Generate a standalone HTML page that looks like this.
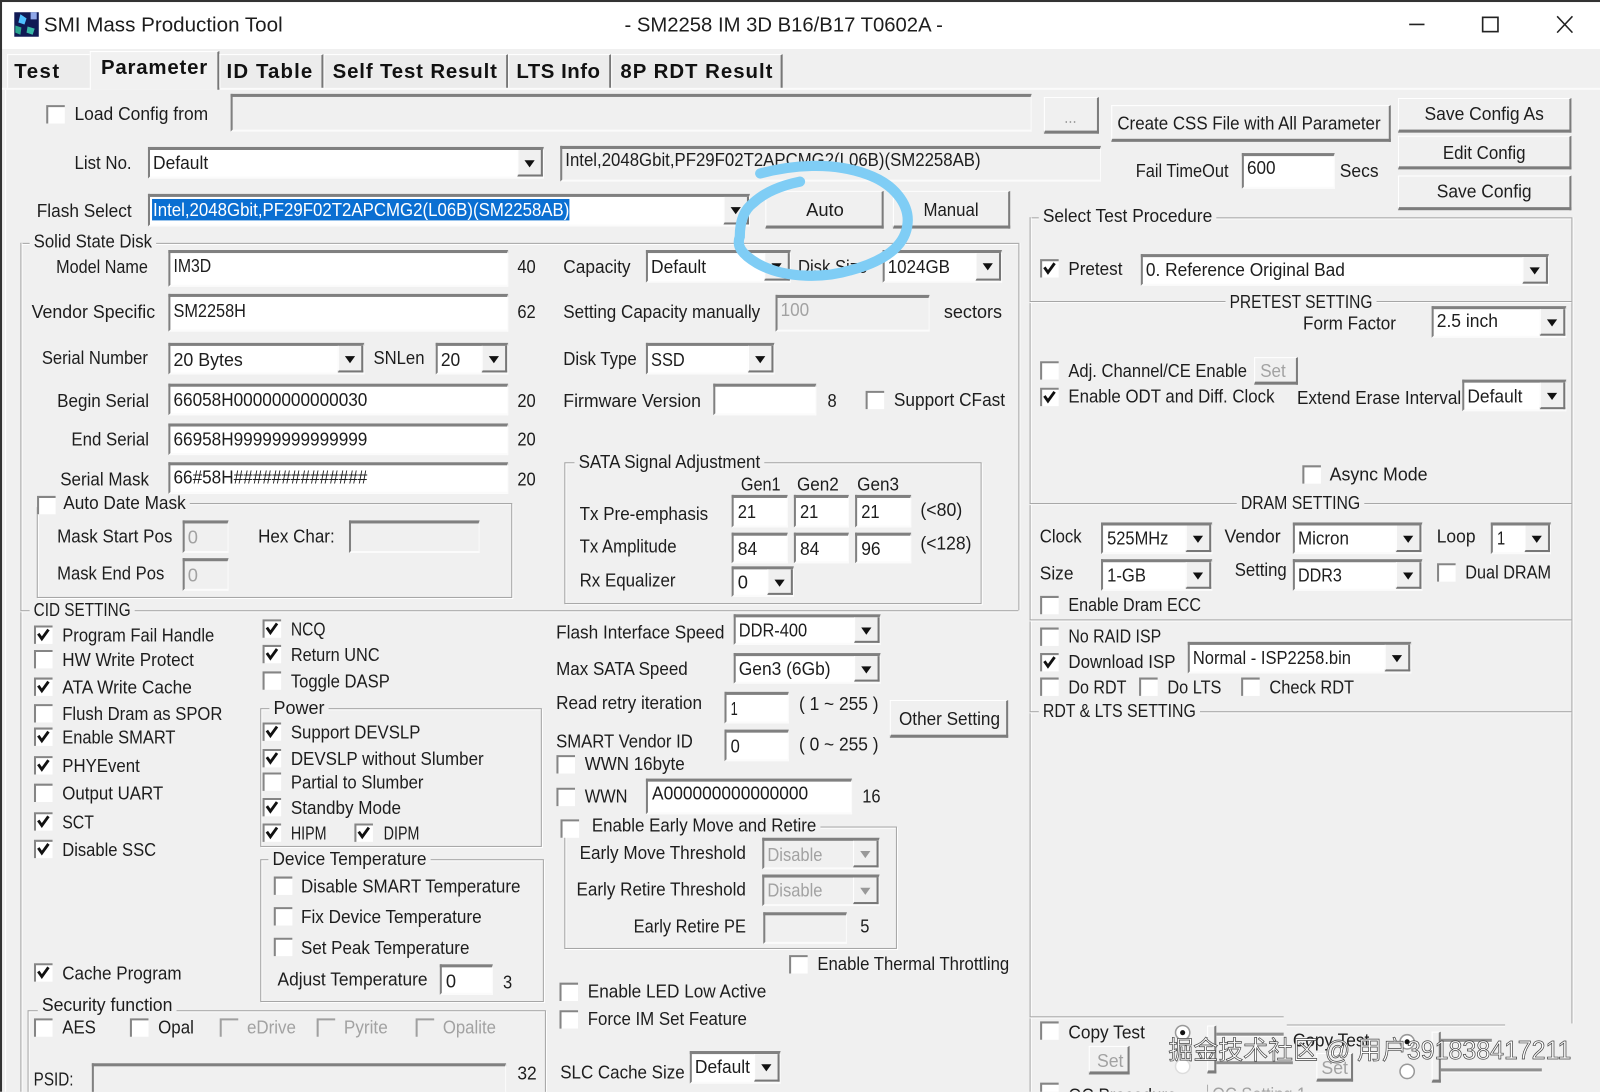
<!DOCTYPE html>
<html><head><meta charset="utf-8"><title>SMI Mass Production Tool</title>
<style>
html,body{margin:0;padding:0;width:1600px;height:1092px;overflow:hidden;background:#f0f0f0}
#p{position:absolute;left:0;top:0;width:1568px;height:1070px;transform:scale(1.020408);transform-origin:0 0;background:#f0f0f0;overflow:hidden;filter:blur(.3px)}
#p div{position:absolute;box-sizing:border-box}
.b{background:#fff;border-top:3px solid #808080;border-left:2px solid #808080;border-right:1px solid #fbfbfb;border-bottom:2px solid #fbfbfb}
.d{background:#f0f0f0}
.r{background:#f0f0f0;border-top:1px solid #fff;border-left:1px solid #fff;border-right:2px solid #7c7c7c;border-bottom:3px solid #7c7c7c}
.b u{position:absolute;right:0;top:0;bottom:0;width:25px;background:#f0f0f0;border-right:2px solid #777;border-bottom:2px solid #777;border-left:1px solid #fff;box-sizing:border-box}
.b u:after{content:"";position:absolute;left:6px;top:10px;border-left:5.5px solid transparent;border-right:5.5px solid transparent;border-top:7px solid #111}
.x u:after{border-top-color:#999}
.g{border:1px solid #a4a4a4;box-shadow:1px 1px 0 #fff,inset 1px 1px 0 #fff}
.h{height:1px;background:#a4a4a4;box-shadow:0 1px 0 #fff}
.v{width:1px;background:#a4a4a4;box-shadow:1px 0 0 #fff}
.k{height:8px;background:#f0f0f0}
.n{background:#ececec;border-top:1px solid #fff;border-left:1px solid #fff;border-right:2px solid #777}
svg{position:absolute;left:0;top:0}
text{font-family:"Liberation Sans",sans-serif;font-size:18px;fill:#1d1d1d;transform:translateY(.7px)}
.y{fill:#a2a2a2}
.tt{font-size:20px;transform:none}
.tb{font-size:20px;font-weight:bold;fill:#111;transform:translateY(-.5px)}
.w{fill:#fff}
.wm{font-family:"Liberation Sans","Noto Sans CJK SC",sans-serif;font-size:25px;fill:#fff;stroke:#444;stroke-width:.7px;transform:none}
</style></head><body>
<div id="p">
<!-- title bar -->
<div style="left:0;top:0;width:1568px;height:48px;background:#fff"></div>
<div style="left:0;top:0;width:1568px;height:2px;background:#333"></div>
<div style="left:0;top:0;width:2px;height:1070px;background:#333"></div>
<!-- tabs -->
<div style="left:2px;top:86px;width:1566px;height:2px;background:#fbfbfb"></div>
<div class="n" style="left:7px;top:53px;width:81px;height:33px;border-right:0"></div>
<div style="left:88px;top:50px;width:127px;height:38px;background:#f1f1f1;border-top:1px solid #fff;border-left:1px solid #fff;border-right:2px solid #777"></div>
<div class="n" style="left:215px;top:53px;width:102px;height:33px"></div>
<div class="n" style="left:317px;top:53px;width:181px;height:33px"></div>
<div class="n" style="left:498px;top:53px;width:101px;height:33px"></div>
<div class="n" style="left:599px;top:53px;width:168px;height:33px"></div>
<div style="left:5px;top:88px;width:1px;height:982px;background:#fff"></div>
<!-- top row boxes -->
<div class="b d" style="left:226px;top:92px;width:785px;height:37px"></div>
<div class="r" style="left:1023px;top:95px;width:54px;height:36px"></div>
<div class="r" style="left:1089px;top:103px;width:274px;height:36px"></div>
<div class="r" style="left:1370px;top:96px;width:170px;height:34px"></div>
<div class="r" style="left:1370px;top:133px;width:170px;height:33px"></div>
<div class="r" style="left:1370px;top:172px;width:170px;height:34px"></div>
<div class="b" style="left:145px;top:144px;width:388px;height:31px"><u></u></div>
<div class="b d" style="left:549px;top:143px;width:530px;height:35px"></div>
<div class="b" style="left:1217px;top:150px;width:91px;height:35px"></div>
<div class="b" style="left:145px;top:190px;width:590px;height:32px"><u></u></div>
<div style="left:149px;top:195px;width:409px;height:21px;background:#0a6fd2"></div>
<div class="r" style="left:750px;top:187px;width:116px;height:37px"></div>
<div class="r" style="left:875px;top:187px;width:115px;height:37px"></div>
<!-- SSD group frames -->
<div class="h" style="left:20px;top:238px;width:978px"></div>
<div class="v" style="left:20px;top:238px;height:832px"></div>
<div class="v" style="left:998px;top:238px;height:360px"></div>
<div class="h" style="left:20px;top:598px;width:978px"></div>
<div class="k" style="left:29px;top:234px;width:124px"></div>
<div class="k" style="left:29px;top:594px;width:103px"></div>
<!-- SSD boxes -->
<div class="b" style="left:165px;top:245px;width:333px;height:36px"></div>
<div class="b" style="left:633px;top:245px;width:142px;height:32px"><u></u></div>
<div class="b" style="left:865px;top:245px;width:117px;height:32px"><u></u></div>
<div class="b" style="left:165px;top:288px;width:333px;height:37px"></div>
<div class="b d" style="left:760px;top:289px;width:151px;height:36px"></div>
<div class="b" style="left:165px;top:336px;width:192px;height:31px"><u></u></div>
<div class="b" style="left:427px;top:336px;width:71px;height:31px"><u></u></div>
<div class="b" style="left:633px;top:336px;width:126px;height:31px"><u></u></div>
<div class="b" style="left:165px;top:376px;width:333px;height:31px"></div>
<div class="b" style="left:699px;top:376px;width:101px;height:31px"></div>
<div class="b" style="left:165px;top:415px;width:333px;height:31px"></div>
<div class="b" style="left:165px;top:453px;width:333px;height:31px"></div>
<!-- SATA group -->
<div class="g" style="left:553px;top:453px;width:409px;height:139px"></div>
<div class="k" style="left:563px;top:449px;width:186px"></div>
<div class="b" style="left:717px;top:485px;width:55px;height:32px"></div>
<div class="b" style="left:778px;top:485px;width:54px;height:32px"></div>
<div class="b" style="left:838px;top:485px;width:55px;height:32px"></div>
<div class="b" style="left:717px;top:522px;width:55px;height:30px"></div>
<div class="b" style="left:778px;top:522px;width:54px;height:30px"></div>
<div class="b" style="left:838px;top:522px;width:55px;height:30px"></div>
<div class="b" style="left:717px;top:555px;width:61px;height:30px"><u></u></div>
<!-- auto date -->
<div class="g" style="left:36px;top:493px;width:466px;height:93px"></div>
<div class="k" style="left:34px;top:489px;width:152px"></div>
<div class="b d" style="left:179px;top:510px;width:45px;height:32px"></div>
<div class="b d" style="left:342px;top:510px;width:128px;height:32px"></div>
<div class="b d" style="left:179px;top:547px;width:45px;height:32px"></div>
<!-- power / temp -->
<div class="g" style="left:255px;top:694px;width:276px;height:136px"></div>
<div class="k" style="left:264px;top:690px;width:58px"></div>
<div class="g" style="left:255px;top:842px;width:278px;height:140px"></div>
<div class="k" style="left:263px;top:838px;width:159px"></div>
<div class="b" style="left:431px;top:945px;width:52px;height:30px"></div>
<!-- middle -->
<div class="b" style="left:719px;top:602px;width:144px;height:30px"><u></u></div>
<div class="b" style="left:719px;top:640px;width:144px;height:30px"><u></u></div>
<div class="b" style="left:710px;top:678px;width:63px;height:31px"></div>
<div class="r" style="left:872px;top:686px;width:116px;height:37px"></div>
<div class="b" style="left:710px;top:715px;width:63px;height:31px"></div>
<div class="b" style="left:633px;top:763px;width:202px;height:35px"></div>
<div class="g" style="left:553px;top:810px;width:326px;height:120px"></div>
<div class="k" style="left:548px;top:806px;width:256px"></div>
<div class="b d x" style="left:747px;top:821px;width:115px;height:31px"><u></u></div>
<div class="b d x" style="left:747px;top:857px;width:115px;height:31px"><u></u></div>
<div class="b d" style="left:748px;top:894px;width:82px;height:31px"></div>
<div class="b" style="left:676px;top:1030px;width:89px;height:32px"><u></u></div>
<!-- security -->
<div class="g" style="left:27px;top:990px;width:508px;height:90px"></div>
<div class="k" style="left:37px;top:986px;width:136px"></div>
<div class="b d" style="left:90px;top:1042px;width:406px;height:34px"></div>
<!-- right column -->
<div class="h" style="left:1009px;top:213px;width:531px"></div>
<div class="v" style="left:1009px;top:213px;height:857px"></div>
<div class="v" style="left:1540px;top:213px;height:790px"></div>
<div class="k" style="left:1018px;top:209px;width:174px"></div>
<div class="b" style="left:1118px;top:249px;width:400px;height:31px"><u></u></div>
<div class="h" style="left:1009px;top:295px;width:531px"></div>
<div class="k" style="left:1201px;top:291px;width:148px"></div>
<div class="b" style="left:1403px;top:300px;width:132px;height:31px"><u></u></div>
<div class="r" style="left:1229px;top:350px;width:43px;height:27px"></div>
<div class="b" style="left:1433px;top:372px;width:102px;height:31px"><u></u></div>
<div class="h" style="left:1009px;top:493px;width:531px"></div>
<div class="k" style="left:1212px;top:489px;width:125px"></div>
<div class="b" style="left:1079px;top:512px;width:109px;height:31px"><u></u></div>
<div class="b" style="left:1267px;top:512px;width:127px;height:31px"><u></u></div>
<div class="b" style="left:1461px;top:512px;width:59px;height:31px"><u></u></div>
<div class="b" style="left:1079px;top:548px;width:109px;height:31px"><u></u></div>
<div class="b" style="left:1267px;top:548px;width:127px;height:31px"><u></u></div>
<div class="h" style="left:1009px;top:607px;width:531px"></div>
<div class="b" style="left:1164px;top:629px;width:219px;height:31px"><u></u></div>
<div class="h" style="left:1009px;top:697px;width:531px"></div>
<div class="k" style="left:1018px;top:693px;width:158px"></div>
<!-- bottom right -->
<div class="h" style="left:1009px;top:996px;width:249px"></div>
<div class="h" style="left:1261px;top:1004px;width:214px"></div>
<div class="v" style="left:1183px;top:1063px;height:7px"></div>
<div class="r" style="left:1067px;top:1025px;width:40px;height:28px"></div>
<div class="r" style="left:1290px;top:1032px;width:36px;height:28px"></div>
<div class="h" style="left:1192px;top:1012px;width:66px;height:3px;background:#909090"></div>
<div class="h" style="left:1192px;top:1040px;width:75px;height:3px;background:#909090"></div>
<div class="h" style="left:1411px;top:1018px;width:51px;height:3px;background:#909090"></div>
<div class="h" style="left:1411px;top:1047px;width:100px;height:3px;background:#909090"></div>
<div class="r" style="left:1183px;top:1005px;width:9px;height:47px"></div>
<div class="r" style="left:1403px;top:1011px;width:9px;height:50px"></div>

<svg width="1568" height="1070" viewBox="0 0 1568 1070" xmlns="http://www.w3.org/2000/svg">
<defs>
<g id="c0"><rect x="-.5" width="18" height="18" fill="#fff"/><path d="M.3 18V1H17.500" fill="none" stroke="#858585" stroke-width="2"/></g>
<g id="c1"><use href="#c0"/><path d="M3.500 8L7 13L13.500 4" fill="none" stroke="#111" stroke-width="2.800"/></g>
<g id="c2"><rect x="-.5" width="18" height="18" fill="#f0f0f0"/><path d="M.3 18V1H17.500" fill="none" stroke="#a0a0a0" stroke-width="2"/></g>
</defs>

<!-- window icon -->
<rect x="14" y="12" width="24" height="24" fill="#101a55"/>
<path d="M20 14l6 4-2 6-6-2z" fill="#4fc0ff"/><path d="M15 25l6 2-1 7-5-2z" fill="#2aa58f"/><path d="M27 26l7 2-2 6-6-2z" fill="#39b8a8"/><path d="M30 12h6v7h-6z" fill="#8fa7e8"/>

<text class="tt" x="43" y="31" textLength="234" lengthAdjust="spacingAndGlyphs">SMI Mass Production Tool</text>
<text class="tt" x="612" y="31" textLength="312" lengthAdjust="spacingAndGlyphs">- SM2258 IM 3D B16/B17 T0602A -</text>
<path d="M1381 24h15" stroke="#222" stroke-width="1.6"/>
<rect x="1453" y="17" width="15" height="14" fill="none" stroke="#222" stroke-width="1.6"/>
<path d="M1526 16l15 16M1541 16l-15 16" stroke="#222" stroke-width="1.5"/>

<text class="tb" x="14" y="77" textLength="44" lengthAdjust="spacing">Test</text>
<text class="tb" x="99" y="73" textLength="104" lengthAdjust="spacing">Parameter</text>
<text class="tb" x="222" y="77" textLength="84" lengthAdjust="spacing">ID Table</text>
<text class="tb" x="326" y="77" textLength="161" lengthAdjust="spacing">Self Test Result</text>
<text class="tb" x="506" y="77" textLength="82" lengthAdjust="spacing">LTS Info</text>
<text class="tb" x="608" y="77" textLength="149" lengthAdjust="spacing">8P RDT Result</text>

<use href="#c0" x="46" y="103"/>
<text x="73" y="117" textLength="131" lengthAdjust="spacingAndGlyphs">Load Config from</text>
<text class="y" x="1043" y="120" textLength="12" lengthAdjust="spacingAndGlyphs">...</text>
<text x="1095" y="126" textLength="258" lengthAdjust="spacingAndGlyphs">Create CSS File with All Parameter</text>
<text x="1396" y="117" textLength="117" lengthAdjust="spacingAndGlyphs">Save Config As</text>
<text x="1414" y="155" textLength="81" lengthAdjust="spacingAndGlyphs">Edit Config</text>
<text x="1408" y="193" textLength="93" lengthAdjust="spacingAndGlyphs">Save Config</text>
<text x="73" y="165" textLength="56" lengthAdjust="spacingAndGlyphs">List No.</text>
<text x="150" y="165" textLength="54" lengthAdjust="spacingAndGlyphs">Default</text>
<text x="554" y="162" textLength="407" lengthAdjust="spacingAndGlyphs">Intel,2048Gbit,PF29F02T2APCMG2(L06B)(SM2258AB)</text>
<text x="1113" y="173" textLength="91" lengthAdjust="spacingAndGlyphs">Fail TimeOut</text>
<text x="1222" y="170" textLength="28" lengthAdjust="spacingAndGlyphs">600</text>
<text x="1313" y="173" textLength="38" lengthAdjust="spacingAndGlyphs">Secs</text>
<text x="36" y="212" textLength="93" lengthAdjust="spacingAndGlyphs">Flash Select</text>
<text class="w" x="150" y="211" textLength="408" lengthAdjust="spacingAndGlyphs">Intel,2048Gbit,PF29F02T2APCMG2(L06B)(SM2258AB)</text>
<text x="790" y="211" textLength="37" lengthAdjust="spacingAndGlyphs">Auto</text>
<text x="905" y="211" textLength="54" lengthAdjust="spacingAndGlyphs">Manual</text>

<text x="33" y="242" textLength="116" lengthAdjust="spacingAndGlyphs">Solid State Disk</text>
<text x="55" y="267" textLength="90" lengthAdjust="spacingAndGlyphs">Model Name</text>
<text x="170" y="266" textLength="37" lengthAdjust="spacingAndGlyphs">IM3D</text>
<text x="507" y="267" textLength="18" lengthAdjust="spacingAndGlyphs">40</text>
<text x="552" y="267" textLength="66" lengthAdjust="spacingAndGlyphs">Capacity</text>
<text x="638" y="267" textLength="54" lengthAdjust="spacingAndGlyphs">Default</text>
<text x="782" y="267" textLength="68" lengthAdjust="spacingAndGlyphs">Disk Size</text>
<text x="870" y="267" textLength="61" lengthAdjust="spacingAndGlyphs">1024GB</text>
<text x="31" y="311" textLength="121" lengthAdjust="spacingAndGlyphs">Vendor Specific</text>
<text x="170" y="310" textLength="71" lengthAdjust="spacingAndGlyphs">SM2258H</text>
<text x="507" y="311" textLength="18" lengthAdjust="spacingAndGlyphs">62</text>
<text x="552" y="311" textLength="193" lengthAdjust="spacingAndGlyphs">Setting Capacity manually</text>
<text class="y" x="765" y="309" textLength="28" lengthAdjust="spacingAndGlyphs">100</text>
<text x="925" y="311" textLength="57" lengthAdjust="spacingAndGlyphs">sectors</text>
<text x="41" y="356" textLength="104" lengthAdjust="spacingAndGlyphs">Serial Number</text>
<text x="170" y="358" textLength="68" lengthAdjust="spacingAndGlyphs">20 Bytes</text>
<text x="366" y="356" textLength="50" lengthAdjust="spacingAndGlyphs">SNLen</text>
<text x="432" y="358" textLength="19" lengthAdjust="spacingAndGlyphs">20</text>
<text x="552" y="357" textLength="72" lengthAdjust="spacingAndGlyphs">Disk Type</text>
<text x="638" y="358" textLength="33" lengthAdjust="spacingAndGlyphs">SSD</text>
<text x="56" y="398" textLength="90" lengthAdjust="spacingAndGlyphs">Begin Serial</text>
<text x="170" y="397" textLength="190" lengthAdjust="spacingAndGlyphs">66058H00000000000030</text>
<text x="507" y="398" textLength="18" lengthAdjust="spacingAndGlyphs">20</text>
<text x="552" y="398" textLength="135" lengthAdjust="spacingAndGlyphs">Firmware Version</text>
<text x="811" y="398" textLength="9" lengthAdjust="spacingAndGlyphs">8</text>
<use href="#c0" x="849" y="383"/>
<text x="876" y="397" textLength="109" lengthAdjust="spacingAndGlyphs">Support CFast</text>
<text x="70" y="436" textLength="76" lengthAdjust="spacingAndGlyphs">End Serial</text>
<text x="170" y="436" textLength="190" lengthAdjust="spacingAndGlyphs">66958H99999999999999</text>
<text x="507" y="436" textLength="18" lengthAdjust="spacingAndGlyphs">20</text>
<text x="59" y="475" textLength="87" lengthAdjust="spacingAndGlyphs">Serial Mask</text>
<text x="170" y="473" textLength="190" lengthAdjust="spacingAndGlyphs">66#58H##############</text>
<text x="507" y="475" textLength="18" lengthAdjust="spacingAndGlyphs">20</text>

<text x="567" y="458" textLength="178" lengthAdjust="spacingAndGlyphs">SATA Signal Adjustment</text>
<text x="726" y="480" textLength="39" lengthAdjust="spacingAndGlyphs">Gen1</text>
<text x="781" y="480" textLength="41" lengthAdjust="spacingAndGlyphs">Gen2</text>
<text x="840" y="480" textLength="41" lengthAdjust="spacingAndGlyphs">Gen3</text>
<text x="568" y="509" textLength="126" lengthAdjust="spacingAndGlyphs">Tx Pre-emphasis</text>
<text x="723" y="507" textLength="18" lengthAdjust="spacingAndGlyphs">21</text>
<text x="784" y="507" textLength="18" lengthAdjust="spacingAndGlyphs">21</text>
<text x="844" y="507" textLength="18" lengthAdjust="spacingAndGlyphs">21</text>
<text x="902" y="505" textLength="41" lengthAdjust="spacingAndGlyphs">(&lt;80)</text>
<text x="568" y="541" textLength="95" lengthAdjust="spacingAndGlyphs">Tx Amplitude</text>
<text x="723" y="543" textLength="19" lengthAdjust="spacingAndGlyphs">84</text>
<text x="784" y="543" textLength="19" lengthAdjust="spacingAndGlyphs">84</text>
<text x="844" y="543" textLength="19" lengthAdjust="spacingAndGlyphs">96</text>
<text x="902" y="538" textLength="50" lengthAdjust="spacingAndGlyphs">(&lt;128)</text>
<text x="568" y="574" textLength="94" lengthAdjust="spacingAndGlyphs">Rx Equalizer</text>
<text x="723" y="576" textLength="10" lengthAdjust="spacingAndGlyphs">0</text>

<use href="#c0" x="37" y="486"/>
<text x="62" y="498" textLength="120" lengthAdjust="spacingAndGlyphs">Auto Date Mask</text>
<text x="56" y="531" textLength="113" lengthAdjust="spacingAndGlyphs">Mask Start Pos</text>
<text class="y" x="184" y="532" textLength="10" lengthAdjust="spacingAndGlyphs">0</text>
<text x="253" y="531" textLength="75" lengthAdjust="spacingAndGlyphs">Hex Char:</text>
<text x="56" y="567" textLength="105" lengthAdjust="spacingAndGlyphs">Mask End Pos</text>
<text class="y" x="184" y="569" textLength="10" lengthAdjust="spacingAndGlyphs">0</text>

<text x="33" y="603" textLength="95" lengthAdjust="spacingAndGlyphs">CID SETTING</text>
<use href="#c1" x="34" y="613"/><text x="61" y="628" textLength="149" lengthAdjust="spacingAndGlyphs">Program Fail Handle</text>
<use href="#c0" x="34" y="637"/><text x="61" y="652" textLength="129" lengthAdjust="spacingAndGlyphs">HW Write Protect</text>
<use href="#c1" x="34" y="664"/><text x="61" y="679" textLength="127" lengthAdjust="spacingAndGlyphs">ATA Write Cache</text>
<use href="#c0" x="34" y="690"/><text x="61" y="705" textLength="157" lengthAdjust="spacingAndGlyphs">Flush Dram as SPOR</text>
<use href="#c1" x="34" y="713"/><text x="61" y="728" textLength="111" lengthAdjust="spacingAndGlyphs">Enable SMART</text>
<use href="#c1" x="34" y="741"/><text x="61" y="756" textLength="76" lengthAdjust="spacingAndGlyphs">PHYEvent</text>
<use href="#c0" x="34" y="768"/><text x="61" y="783" textLength="99" lengthAdjust="spacingAndGlyphs">Output UART</text>
<use href="#c1" x="34" y="796"/><text x="61" y="811" textLength="31" lengthAdjust="spacingAndGlyphs">SCT</text>
<use href="#c1" x="34" y="823"/><text x="61" y="838" textLength="92" lengthAdjust="spacingAndGlyphs">Disable SSC</text>
<use href="#c1" x="34" y="944"/><text x="61" y="959" textLength="117" lengthAdjust="spacingAndGlyphs">Cache Program</text>

<use href="#c1" x="258" y="607"/><text x="285" y="622" textLength="34" lengthAdjust="spacingAndGlyphs">NCQ</text>
<use href="#c1" x="258" y="632"/><text x="285" y="647" textLength="87" lengthAdjust="spacingAndGlyphs">Return UNC</text>
<use href="#c0" x="258" y="658"/><text x="285" y="673" textLength="97" lengthAdjust="spacingAndGlyphs">Toggle DASP</text>
<text x="268" y="699" textLength="50" lengthAdjust="spacingAndGlyphs">Power</text>
<use href="#c1" x="258" y="708"/><text x="285" y="723" textLength="127" lengthAdjust="spacingAndGlyphs">Support DEVSLP</text>
<use href="#c1" x="258" y="734"/><text x="285" y="749" textLength="189" lengthAdjust="spacingAndGlyphs">DEVSLP without Slumber</text>
<use href="#c0" x="258" y="757"/><text x="285" y="772" textLength="130" lengthAdjust="spacingAndGlyphs">Partial to Slumber</text>
<use href="#c1" x="258" y="782"/><text x="285" y="797" textLength="108" lengthAdjust="spacingAndGlyphs">Standby Mode</text>
<use href="#c1" x="258" y="807"/><text x="285" y="822" textLength="35" lengthAdjust="spacingAndGlyphs">HIPM</text>
<use href="#c1" x="348" y="807"/><text x="376" y="822" textLength="35" lengthAdjust="spacingAndGlyphs">DIPM</text>
<text x="267" y="847" textLength="151" lengthAdjust="spacingAndGlyphs">Device Temperature</text>
<use href="#c0" x="269" y="859"/><text x="295" y="874" textLength="215" lengthAdjust="spacingAndGlyphs">Disable SMART Temperature</text>
<use href="#c0" x="269" y="889"/><text x="295" y="904" textLength="177" lengthAdjust="spacingAndGlyphs">Fix Device Temperature</text>
<use href="#c0" x="269" y="919"/><text x="295" y="934" textLength="165" lengthAdjust="spacingAndGlyphs">Set Peak Temperature</text>
<text x="272" y="965" textLength="147" lengthAdjust="spacingAndGlyphs">Adjust Temperature</text>
<text x="437" y="967" textLength="10" lengthAdjust="spacingAndGlyphs">0</text>
<text x="493" y="968" textLength="9" lengthAdjust="spacingAndGlyphs">3</text>

<text x="545" y="625" textLength="165" lengthAdjust="spacingAndGlyphs">Flash Interface Speed</text>
<text x="724" y="623" textLength="67" lengthAdjust="spacingAndGlyphs">DDR-400</text>
<text x="545" y="661" textLength="129" lengthAdjust="spacingAndGlyphs">Max SATA Speed</text>
<text x="724" y="661" textLength="90" lengthAdjust="spacingAndGlyphs">Gen3 (6Gb)</text>
<text x="545" y="694" textLength="143" lengthAdjust="spacingAndGlyphs">Read retry iteration</text>
<text x="716" y="700" textLength="7" lengthAdjust="spacingAndGlyphs">1</text>
<text x="783" y="695" textLength="78" lengthAdjust="spacingAndGlyphs">( 1 ~ 255 )</text>
<text x="881" y="710" textLength="99" lengthAdjust="spacingAndGlyphs">Other Setting</text>
<text x="545" y="732" textLength="134" lengthAdjust="spacingAndGlyphs">SMART Vendor ID</text>
<text x="716" y="737" textLength="9" lengthAdjust="spacingAndGlyphs">0</text>
<text x="783" y="735" textLength="78" lengthAdjust="spacingAndGlyphs">( 0 ~ 255 )</text>
<use href="#c0" x="546" y="740"/><text x="573" y="754" textLength="98" lengthAdjust="spacingAndGlyphs">WWN 16byte</text>
<use href="#c0" x="546" y="772"/><text x="573" y="786" textLength="42" lengthAdjust="spacingAndGlyphs">WWN</text>
<text x="639" y="783" textLength="153" lengthAdjust="spacingAndGlyphs">A000000000000000</text>
<text x="845" y="786" textLength="18" lengthAdjust="spacingAndGlyphs">16</text>
<use href="#c0" x="550" y="803"/><text x="580" y="814" textLength="220" lengthAdjust="spacingAndGlyphs">Enable Early Move and Retire</text>
<text x="568" y="841" textLength="163" lengthAdjust="spacingAndGlyphs">Early Move Threshold</text>
<text class="y" x="752" y="843" textLength="54" lengthAdjust="spacingAndGlyphs">Disable</text>
<text x="565" y="877" textLength="166" lengthAdjust="spacingAndGlyphs">Early Retire Threshold</text>
<text class="y" x="752" y="878" textLength="54" lengthAdjust="spacingAndGlyphs">Disable</text>
<text x="621" y="913" textLength="110" lengthAdjust="spacingAndGlyphs">Early Retire PE</text>
<text x="843" y="913" textLength="9" lengthAdjust="spacingAndGlyphs">5</text>
<use href="#c0" x="774" y="936"/><text x="801" y="950" textLength="188" lengthAdjust="spacingAndGlyphs">Enable Thermal Throttling</text>
<use href="#c0" x="549" y="963"/><text x="576" y="977" textLength="175" lengthAdjust="spacingAndGlyphs">Enable LED Low Active</text>
<use href="#c0" x="549" y="990"/><text x="576" y="1004" textLength="156" lengthAdjust="spacingAndGlyphs">Force IM Set Feature</text>
<text x="549" y="1056" textLength="122" lengthAdjust="spacingAndGlyphs">SLC Cache Size</text>
<text x="681" y="1051" textLength="54" lengthAdjust="spacingAndGlyphs">Default</text>

<text x="41" y="990" textLength="128" lengthAdjust="spacingAndGlyphs">Security function</text>
<use href="#c0" x="34" y="998"/><text x="61" y="1012" textLength="33" lengthAdjust="spacingAndGlyphs">AES</text>
<use href="#c0" x="128" y="998"/><text x="155" y="1012" textLength="35" lengthAdjust="spacingAndGlyphs">Opal</text>
<use href="#c2" x="216" y="998"/><text class="y" x="242" y="1012" textLength="48" lengthAdjust="spacingAndGlyphs">eDrive</text>
<use href="#c2" x="311" y="998"/><text class="y" x="337" y="1012" textLength="43" lengthAdjust="spacingAndGlyphs">Pyrite</text>
<use href="#c2" x="408" y="998"/><text class="y" x="434" y="1012" textLength="52" lengthAdjust="spacingAndGlyphs">Opalite</text>
<text x="33" y="1063" textLength="39" lengthAdjust="spacingAndGlyphs">PSID:</text>
<text x="507" y="1057" textLength="19" lengthAdjust="spacingAndGlyphs">32</text>

<text x="1022" y="217" textLength="166" lengthAdjust="spacingAndGlyphs">Select Test Procedure</text>
<use href="#c1" x="1020" y="254"/><text x="1047" y="269" textLength="53" lengthAdjust="spacingAndGlyphs">Pretest</text>
<text x="1123" y="270" textLength="195" lengthAdjust="spacingAndGlyphs">0. Reference Original Bad</text>
<text x="1205" y="301" textLength="140" lengthAdjust="spacingAndGlyphs">PRETEST SETTING</text>
<text x="1277" y="322" textLength="91" lengthAdjust="spacingAndGlyphs">Form Factor</text>
<text x="1408" y="320" textLength="60" lengthAdjust="spacingAndGlyphs">2.5 inch</text>
<use href="#c0" x="1020" y="354"/><text x="1047" y="369" textLength="175" lengthAdjust="spacingAndGlyphs">Adj. Channel/CE Enable</text>
<text class="y" x="1235" y="369" textLength="25" lengthAdjust="spacingAndGlyphs">Set</text>
<use href="#c1" x="1020" y="380"/><text x="1047" y="394" textLength="202" lengthAdjust="spacingAndGlyphs">Enable ODT and Diff. Clock</text>
<text x="1271" y="395" textLength="161" lengthAdjust="spacingAndGlyphs">Extend Erase Interval</text>
<text x="1438" y="394" textLength="54" lengthAdjust="spacingAndGlyphs">Default</text>
<use href="#c0" x="1277" y="456"/><text x="1303" y="470" textLength="96" lengthAdjust="spacingAndGlyphs">Async Mode</text>
<text x="1216" y="498" textLength="117" lengthAdjust="spacingAndGlyphs">DRAM SETTING</text>
<text x="1019" y="531" textLength="41" lengthAdjust="spacingAndGlyphs">Clock</text>
<text x="1085" y="533" textLength="60" lengthAdjust="spacingAndGlyphs">525MHz</text>
<text x="1200" y="531" textLength="55" lengthAdjust="spacingAndGlyphs">Vendor</text>
<text x="1272" y="533" textLength="50" lengthAdjust="spacingAndGlyphs">Micron</text>
<text x="1408" y="531" textLength="38" lengthAdjust="spacingAndGlyphs">Loop</text>
<text x="1467" y="533" textLength="8" lengthAdjust="spacingAndGlyphs">1</text>
<text x="1019" y="567" textLength="33" lengthAdjust="spacingAndGlyphs">Size</text>
<text x="1085" y="569" textLength="38" lengthAdjust="spacingAndGlyphs">1-GB</text>
<text x="1210" y="564" textLength="51" lengthAdjust="spacingAndGlyphs">Setting</text>
<text x="1272" y="569" textLength="43" lengthAdjust="spacingAndGlyphs">DDR3</text>
<use href="#c0" x="1409" y="552"/><text x="1436" y="566" textLength="84" lengthAdjust="spacingAndGlyphs">Dual DRAM</text>
<use href="#c0" x="1020" y="584"/><text x="1047" y="598" textLength="130" lengthAdjust="spacingAndGlyphs">Enable Dram ECC</text>
<use href="#c0" x="1020" y="615"/><text x="1047" y="629" textLength="91" lengthAdjust="spacingAndGlyphs">No RAID ISP</text>
<use href="#c1" x="1020" y="640"/><text x="1047" y="654" textLength="105" lengthAdjust="spacingAndGlyphs">Download ISP</text>
<text x="1169" y="650" textLength="155" lengthAdjust="spacingAndGlyphs">Normal - ISP2258.bin</text>
<use href="#c0" x="1020" y="664"/><text x="1047" y="679" textLength="57" lengthAdjust="spacingAndGlyphs">Do RDT</text>
<use href="#c0" x="1117" y="664"/><text x="1144" y="679" textLength="53" lengthAdjust="spacingAndGlyphs">Do LTS</text>
<use href="#c0" x="1217" y="664"/><text x="1244" y="679" textLength="83" lengthAdjust="spacingAndGlyphs">Check RDT</text>
<text x="1022" y="702" textLength="150" lengthAdjust="spacingAndGlyphs">RDT &amp; LTS SETTING</text>

<use href="#c0" x="1020" y="1001"/><text x="1047" y="1017" textLength="75" lengthAdjust="spacingAndGlyphs">Copy Test</text>
<text class="y" x="1075" y="1045" textLength="26" lengthAdjust="spacingAndGlyphs">Set</text>
<text class="y" x="1295" y="1052" textLength="26" lengthAdjust="spacingAndGlyphs">Set</text>
<text x="1267" y="1025" textLength="75" lengthAdjust="spacingAndGlyphs">Copy Test</text>
<circle cx="1159" cy="1012" r="7" fill="#fff" stroke="#999" stroke-width="1.500"/><circle cx="1159" cy="1012" r="2.500" fill="#111"/>
<circle cx="1159" cy="1045" r="7" fill="#fff" stroke="#ddd" stroke-width="1.500"/>
<circle cx="1379" cy="1021" r="7" fill="#fff" stroke="#999" stroke-width="1.500"/><circle cx="1379" cy="1021" r="2.500" fill="#111"/>
<circle cx="1379" cy="1050" r="7" fill="#fff" stroke="#999" stroke-width="1.500"/>
<use href="#c0" x="1020" y="1061"/><text x="1047" y="1079" textLength="106" lengthAdjust="spacingAndGlyphs">QC Procedure</text>
<text class="y" x="1188" y="1078" textLength="92" lengthAdjust="spacingAndGlyphs">QC Setting 1</text>

<!-- hand-drawn highlight -->
<path d="M745 170C775 162 815 158 850 171C875 180 893 200 889 222C885 245 860 258 833 265C810 272 770 274 742 258C725 248 722 240 725 232C725 215 730 205 738 199C750 188 765 182 784 178" fill="none" stroke="#7fcdf5" stroke-width="10" stroke-linecap="round"/>
<!-- watermark -->
<text class="wm" x="1145" y="1038" textLength="395" lengthAdjust="spacingAndGlyphs">掘金技术社区 @ 用户391838417211</text>
</svg>
</div>
</body></html>
